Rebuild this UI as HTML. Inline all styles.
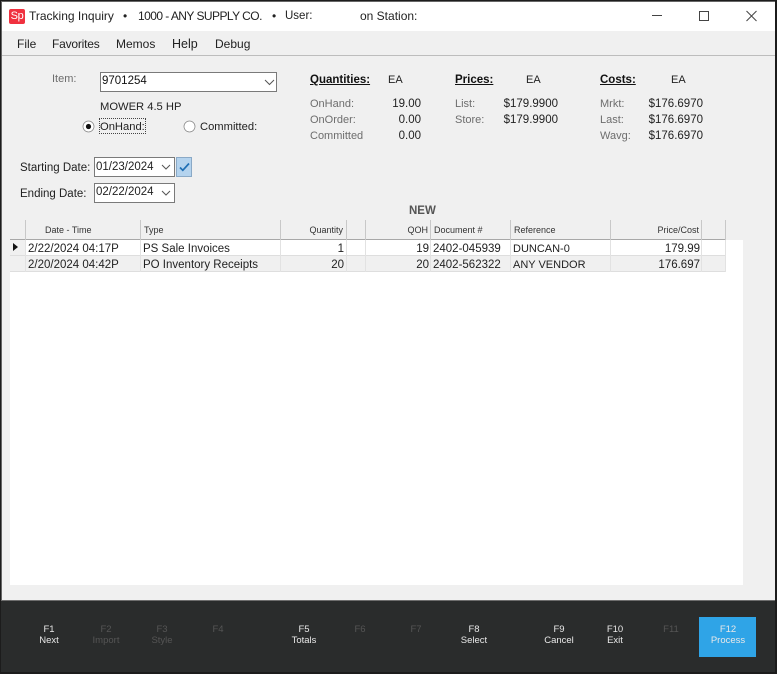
<!DOCTYPE html>
<html><head><meta charset="utf-8"><style>
html,body{margin:0;padding:0;width:777px;height:674px;overflow:hidden;background:#f0f0f0}
body{position:relative;font-family:"Liberation Sans",sans-serif;font-size:11px;color:#222}
div,span.a{position:absolute;white-space:nowrap}
.t{line-height:14px;height:14px}
.b{font-size:11.5px}
.g{color:#6d6d6d}
.h{font-weight:bold;text-decoration:underline;color:#111;font-size:11.5px}
.r{text-align:right}
.c{text-align:center}
.hd{font-size:9px;line-height:12px;height:12px;color:#333}
.cell{font-size:11.5px;line-height:14px;height:14px;color:#222}
.vh{width:1px;background:#c8c8c8;top:220px;height:20px}
.vr{width:1px;background:#e2e2e2;top:240px;height:32px}
.f{width:70px;text-align:center;font-size:9.5px;line-height:11px;color:#e8e8e8}
.d{color:#555}
.box{background:#fff;border:1px solid #7a7a7a;box-sizing:border-box}
</style></head><body>
<!-- title bar -->
<div style="left:0;top:0;width:777px;height:31px;background:#fff"></div>
<div style="left:9px;top:9px;width:16px;height:15px;background:#f0313f;border-radius:2px;color:#fff;font-size:11px;line-height:15px;text-align:center;letter-spacing:-.3px">Sp</div>
<div class="t" style="left:29px;top:9px;font-size:12px;color:#222">Tracking Inquiry</div>
<div class="t" style="left:123px;top:9px;font-size:12px;color:#222">•</div>
<div class="t" style="left:138px;top:9px;font-size:12px;letter-spacing:-.55px;color:#222">1000 - ANY SUPPLY CO.</div>
<div class="t" style="left:272px;top:9px;font-size:12px;color:#222">•</div>
<div class="t" style="left:285px;top:9px;font-size:11.5px;color:#222">User:</div>
<div class="t" style="left:360px;top:9px;font-size:12px;color:#222">on Station:</div>
<svg style="position:absolute;left:640px;top:0" width="137" height="31" fill="none" stroke="#444" stroke-width="1">
<path d="M12 15.5H22"/><rect x="59.5" y="11.5" width="9" height="9"/><path d="M106.5 11l10 10M116.5 11l-10 10"/></svg>
<!-- menu -->
<div style="left:0;top:31px;width:777px;height:24px;background:#f0f0f0;border-bottom:1px solid #bdbdbd"></div>
<div class="t" style="left:17px;top:37px;font-size:12px">File</div>
<div class="t" style="left:52px;top:37px;font-size:12px;letter-spacing:-.2px">Favorites</div>
<div class="t" style="left:116px;top:37px;font-size:12px">Memos</div>
<div class="t" style="left:172px;top:37px;font-size:12.5px">Help</div>
<div class="t" style="left:215px;top:37px;font-size:12px">Debug</div>
<!-- item -->
<div class="t g" style="left:52px;top:72px">Item:</div>
<div class="box" style="left:100px;top:72px;width:177px;height:20px"></div>
<div class="t" style="left:102px;top:74px;font-size:11.5px;color:#111">9701254</div>
<svg style="position:absolute;left:264px;top:79px" width="11" height="7" fill="none" stroke="#555"><path d="M1 1l4.5 4.5L10 1"/></svg>
<div class="t" style="left:100px;top:100px;font-size:11.2px">MOWER 4.5 HP</div>
<svg style="position:absolute;left:82px;top:120px" width="13" height="13"><circle cx="6.5" cy="6.5" r="5.5" fill="#fff" stroke="#8a8a8a" stroke-width=".8"/><circle cx="6.5" cy="6.5" r="2.6" fill="#111"/></svg>
<div style="left:99px;top:118px;width:47px;height:16px;border:1px dotted #444;box-sizing:border-box"></div>
<div class="t" style="left:100px;top:120px;font-size:11.2px">OnHand:</div>
<svg style="position:absolute;left:183px;top:120px" width="13" height="13"><circle cx="6.5" cy="6.5" r="5.5" fill="#fff" stroke="#8a8a8a" stroke-width=".8"/></svg>
<div class="t" style="left:200px;top:120px;font-size:11.2px">Committed:</div>
<!-- quantities -->
<div class="t h" style="left:310px;top:73px">Quantities:</div>
<div class="t" style="left:388px;top:73px">EA</div>
<div class="t g" style="left:310px;top:97px">OnHand:</div>
<div class="t g" style="left:310px;top:113px">OnOrder:</div>
<div class="t g" style="left:310px;top:129px">Committed</div>
<div class="t b r" style="left:371px;top:97px;width:50px">19.00</div>
<div class="t b r" style="left:371px;top:113px;width:50px">0.00</div>
<div class="t b r" style="left:371px;top:129px;width:50px">0.00</div>
<!-- prices -->
<div class="t h" style="left:455px;top:73px">Prices:</div>
<div class="t" style="left:526px;top:73px">EA</div>
<div class="t g" style="left:455px;top:97px">List:</div>
<div class="t g" style="left:455px;top:113px">Store:</div>
<div class="t b r" style="left:488px;top:97px;width:70px">$179.9900</div>
<div class="t b r" style="left:488px;top:113px;width:70px">$179.9900</div>
<!-- costs -->
<div class="t h" style="left:600px;top:73px">Costs:</div>
<div class="t" style="left:671px;top:73px">EA</div>
<div class="t g" style="left:600px;top:97px">Mrkt:</div>
<div class="t g" style="left:600px;top:113px">Last:</div>
<div class="t g" style="left:600px;top:129px">Wavg:</div>
<div class="t b r" style="left:633px;top:97px;width:70px">$176.6970</div>
<div class="t b r" style="left:633px;top:113px;width:70px">$176.6970</div>
<div class="t b r" style="left:633px;top:129px;width:70px">$176.6970</div>
<!-- dates -->
<div class="t b" style="left:20px;top:161px">Starting Date:</div>
<div class="box" style="left:94px;top:157px;width:81px;height:20px"></div>
<div class="t b" style="left:96px;top:160px">01/23/2024</div>
<svg style="position:absolute;left:161px;top:164px" width="10" height="7" fill="none" stroke="#555"><path d="M1 1l4 4 4-4"/></svg>
<div style="left:176px;top:157px;width:16px;height:20px;background:#b4d3ee;border:1px solid #8aa9c6;box-sizing:border-box"></div>
<svg style="position:absolute;left:179px;top:162px" width="11" height="10" fill="none" stroke="#1f6fb5" stroke-width="1.7"><path d="M1 5.5l2.8 2.8L10 1.5"/></svg>
<div class="t b" style="left:20px;top:187px">Ending Date:</div>
<div class="box" style="left:94px;top:183px;width:81px;height:20px"></div>
<div class="t b" style="left:96px;top:185px">02/22/2024</div>
<svg style="position:absolute;left:161px;top:190px" width="10" height="7" fill="none" stroke="#555"><path d="M1 1l4 4 4-4"/></svg>
<div class="t" style="left:409px;top:204px;font-weight:bold;font-size:11.5px;color:#555">NEW</div>
<!-- grid -->
<div style="left:10px;top:240px;width:733px;height:345px;background:#fff"></div>
<div style="left:10px;top:220px;width:716px;height:19px;background:#f0f0f0;border-bottom:1px solid #a8a8a8"></div>
<div style="left:10px;top:256px;width:716px;height:16px;background:#f0f0f0;border-bottom:0"></div>
<div style="left:10px;top:240px;width:16px;height:32px;background:#f0f0f0"></div>
<div style="left:10px;top:255px;width:716px;height:1px;background:#dedede"></div>
<div style="left:10px;top:271px;width:716px;height:1px;background:#dedede"></div>
<div class="vh" style="left:25px"></div><div class="vh" style="left:140px"></div><div class="vh" style="left:280px"></div><div class="vh" style="left:346px"></div><div class="vh" style="left:365px"></div><div class="vh" style="left:430px"></div><div class="vh" style="left:510px"></div><div class="vh" style="left:610px"></div><div class="vh" style="left:701px"></div><div class="vh" style="left:725px"></div>
<div class="vr" style="left:25px"></div><div class="vr" style="left:140px"></div><div class="vr" style="left:280px"></div><div class="vr" style="left:346px"></div><div class="vr" style="left:365px"></div><div class="vr" style="left:430px"></div><div class="vr" style="left:510px"></div><div class="vr" style="left:610px"></div><div class="vr" style="left:701px"></div><div class="vr" style="left:725px"></div>
<div class="hd" style="left:45px;top:224px">Date - Time</div>
<div class="hd" style="left:144px;top:224px">Type</div>
<div class="hd r" style="left:280px;top:224px;width:63px">Quantity</div>
<div class="hd r" style="left:380px;top:224px;width:48px">QOH</div>
<div class="hd" style="left:434px;top:224px">Document #</div>
<div class="hd" style="left:514px;top:224px">Reference</div>
<div class="hd r" style="left:620px;top:224px;width:79px">Price/Cost</div>
<svg style="position:absolute;left:13px;top:243px" width="6" height="8"><path d="M0 0l5 4-5 4z" fill="#111"/></svg>
<div class="cell" style="left:28px;top:242px">2/22/2024 04:17P</div>
<div class="cell" style="left:143px;top:242px">PS Sale Invoices</div>
<div class="cell r" style="left:290px;top:242px;width:54px">1</div>
<div class="cell r" style="left:378px;top:242px;width:51px">19</div>
<div class="cell" style="left:433px;top:242px">2402-045939</div>
<div class="cell" style="left:513px;top:242px;font-size:11px">DUNCAN-0</div>
<div class="cell r" style="left:620px;top:242px;width:80px">179.99</div>
<div class="cell" style="left:28px;top:258px">2/20/2024 04:42P</div>
<div class="cell" style="left:143px;top:258px">PO Inventory Receipts</div>
<div class="cell r" style="left:290px;top:258px;width:54px">20</div>
<div class="cell r" style="left:378px;top:258px;width:51px">20</div>
<div class="cell" style="left:433px;top:258px">2402-562322</div>
<div class="cell" style="left:513px;top:258px;font-size:11px">ANY VENDOR</div>
<div class="cell r" style="left:620px;top:258px;width:80px">176.697</div>
<!-- footer -->
<div style="left:0;top:600px;width:777px;height:74px;background:#2a2c2c;border-top:1px solid #6e6e6e;box-sizing:border-box"></div>
<div style="left:699px;top:617px;width:57px;height:40px;background:#2fa4e7"></div>
<div class="f" style="left:14px;top:624px">F1<br>Next</div>
<div class="f d" style="left:71px;top:624px">F2<br>Import</div>
<div class="f d" style="left:127px;top:624px">F3<br>Style</div>
<div class="f d" style="left:183px;top:624px">F4</div>
<div class="f" style="left:269px;top:624px">F5<br>Totals</div>
<div class="f d" style="left:325px;top:624px">F6</div>
<div class="f d" style="left:381px;top:624px">F7</div>
<div class="f" style="left:439px;top:624px">F8<br>Select</div>
<div class="f" style="left:524px;top:624px">F9<br>Cancel</div>
<div class="f" style="left:580px;top:624px">F10<br>Exit</div>
<div class="f d" style="left:636px;top:624px">F11</div>
<div class="f" style="left:693px;top:624px">F12<br>Process</div>
<!-- window border -->
<div style="left:0;top:0;width:777px;height:674px;border-style:solid;border-color:#1c1c1c;border-width:1px 2px 2px 1px;box-sizing:border-box"></div>
<div style="left:1px;top:1px;width:1px;height:599px;background:#666"></div>
<div style="left:1px;top:1px;width:774px;height:1px;background:#666"></div>
</body></html>
